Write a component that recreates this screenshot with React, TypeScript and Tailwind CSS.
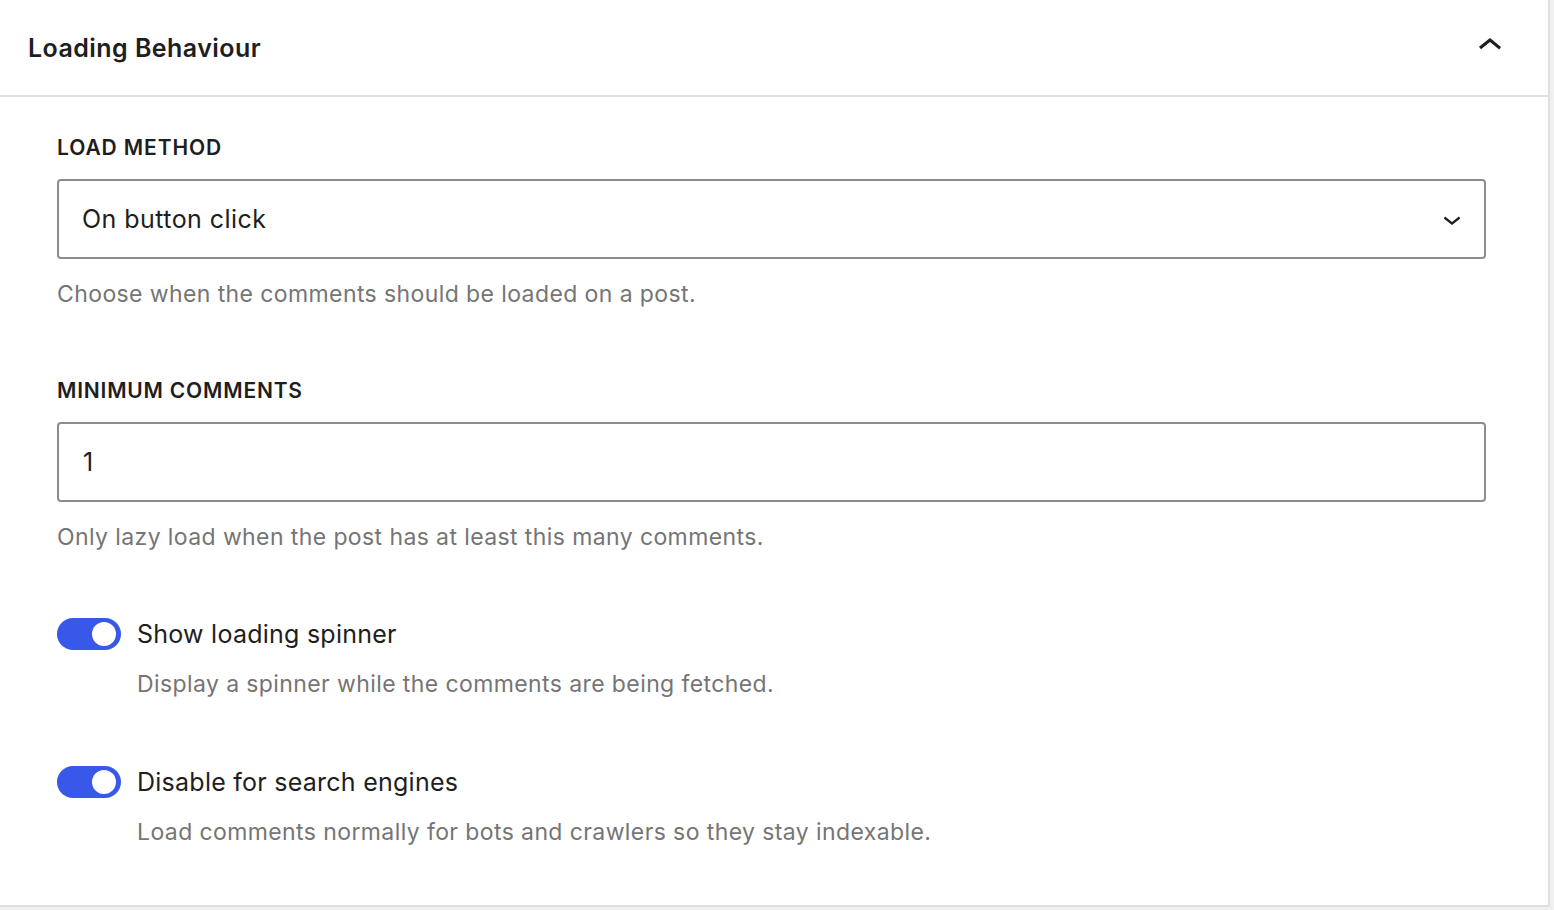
import React from "react";

function Toggle() {
  return (
    <div className="relative w-[64px] h-[32px] rounded-full bg-[#3858e9] shrink-0">
      <div className="absolute right-[5px] top-[4px] w-[24px] h-[24px] rounded-full bg-white" />
    </div>
  );
}

function ToggleRow({ label, help }: { label: string; help: string }) {
  return (
    <div>
      <div className="flex items-center gap-[16px]">
        <Toggle />
        <span className="text-[25px] text-[#1e1e1e] leading-[32px] tracking-[0.25px]">{label}</span>
      </div>
      <div className="pl-[80px] mt-[19px] text-[23px] text-[#757575] leading-[30px] tracking-[0.4px]">{help}</div>
    </div>
  );
}

export default function App() {
  return (
    <div
      className="w-[1554px] h-[910px] bg-[#f0f0f0] overflow-hidden"
      style={{ fontFamily: "Inter, 'Noto Sans', sans-serif" }}
    >
      <div className="w-[1550px] h-[907px] bg-white border-r-2 border-b-2 border-[#e0e0e0]">
        <div className="h-[97px] border-b-2 border-[#e0e0e0] flex items-center justify-between pl-[28px] pr-[34px]">
          <h2 className="text-[25px] font-semibold text-[#1e1e1e] tracking-[0.45px] pt-[2px]">Loading Behaviour</h2>
          <svg width="48" height="48" viewBox="0 0 24 24" className="-mt-[4px]">
            <path d="M6.5 12.4L12 8l5.5 4.5-.9 1.2L12 10l-4.5 3.6-1-1.2z" fill="#1e1e1e" />
          </svg>
        </div>
        <div className="pl-[57px] pr-[62px] pt-[37px]">
          <div className="text-[21px] font-semibold text-[#1e1e1e] uppercase leading-[28px] tracking-[0.9px]">Load method</div>
          <div className="mt-[17px] h-[80px] border-2 border-[#8c8c8c] rounded-[4px] flex items-center justify-between pl-[23px] pr-[14px]">
            <span className="text-[25px] text-[#1e1e1e] tracking-[0.45px] pt-[2px]">On button click</span>
            <svg width="36" height="36" viewBox="0 0 24 24">
              <path d="M17.5 11.6L12 16l-5.5-4.4.9-1.2L12 14l4.6-3.6 1 1.2z" fill="#1e1e1e" />
            </svg>
          </div>
          <div className="mt-[20px] text-[23px] text-[#757575] leading-[30px] tracking-[0.4px]">Choose when the comments should be loaded on a post.</div>

          <div className="mt-[68px] text-[21px] font-semibold text-[#1e1e1e] uppercase leading-[28px] tracking-[0.8px]">Minimum comments</div>
          <div className="mt-[17px] h-[80px] border-2 border-[#8c8c8c] rounded-[4px] flex items-center pl-[24px]">
            <span className="text-[25px] text-[#1e1e1e] pt-[2px]">1</span>
          </div>
          <div className="mt-[20px] text-[23px] text-[#757575] leading-[30px] tracking-[0.4px]">Only lazy load when the post has at least this many comments.</div>

          <div className="mt-[66px]">
            <ToggleRow label="Show loading spinner" help="Display a spinner while the comments are being fetched." />
          </div>
          <div className="mt-[67px]">
            <ToggleRow label="Disable for search engines" help="Load comments normally for bots and crawlers so they stay indexable." />
          </div>
        </div>
      </div>
    </div>
  );
}
